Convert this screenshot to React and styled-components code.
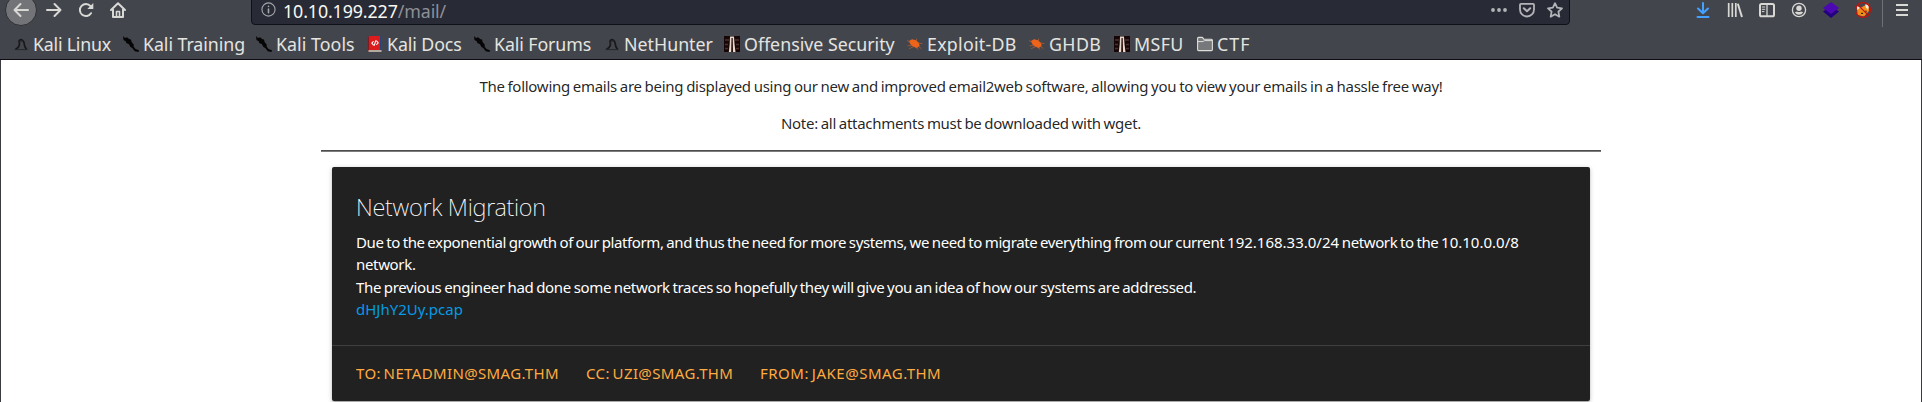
import React from "react";
import styled, { createGlobalStyle } from "styled-components";

const GlobalStyle = createGlobalStyle`
  html, body { margin: 0; height: 402px; overflow: hidden; background: #fff; }
  *, *::before, *::after { box-sizing: border-box; }
  body { font-family: "Noto Sans", "Open Sans", sans-serif; }
`;

const Window = styled.div`
  width: 1922px;
  height: 402px;
  overflow: hidden;
  display: flex;
  flex-direction: column;
`;

/* ---------- browser chrome ---------- */

const Chrome = styled.header`
  height: 60px;
  flex: none;
  background: #43454c;
  border-bottom: 1px solid #0c0c12;
`;

const NavBar = styled.nav`
  display: flex;
  align-items: flex-start;
  height: 33px;
  margin-top: -6px;
  padding: 0 4px 0 5px;
`;

const ToolButton = styled.span`
  width: 32px;
  height: 32px;
  flex: none;
  display: flex;
  align-items: center;
  justify-content: center;
  color: ${(p) => p.$color || "#d8d8d5"};
`;

const BackButton = styled(ToolButton)`
  margin-right: 1px;
  border-radius: 50%;
  background: #737477;
  border: 1px solid #2e3036;
`;

const UrlBar = styled.div`
  width: 1319px;
  height: 31px;
  margin-left: 117px;
  padding: 0 0 0 9px;
  display: flex;
  align-items: center;
  background: #282a36;
  border: 1px solid #101116;
  border-radius: 4px;
`;

const UrlText = styled.div`
  flex: 1;
  margin-left: 7px;
  padding-top: 3px;
  font-size: 17.8px;
  line-height: 24px;
  letter-spacing: -0.1px;
  color: #8f9097;
  white-space: pre;
`;

const Host = styled.span`
  color: #f8f8f2;
`;

const UrlActions = styled.div`
  display: flex;
  align-items: center;
  color: #b3b4b8;
`;

const UrlAction = styled.span`
  width: 28px;
  display: flex;
  justify-content: center;
`;

const Tools = styled.div`
  display: flex;
  margin-left: auto;
`;

const Separator = styled.span`
  width: 1px;
  height: 33px;
  margin: 0 3px;
  background: #6e7075;
`;

const Bookmarks = styled.nav`
  display: flex;
  align-items: center;
  height: 32px;
  padding-left: 13px;
`;

const Bookmark = styled.span`
  width: ${(p) => p.$w}px;
  height: 32px;
  flex: none;
  display: flex;
  align-items: center;
  gap: 4px;
  padding-top: 2px;
  font-size: 17.8px;
  line-height: 24px;
  letter-spacing: ${(p) => p.$track}px;
  color: #e4e4e0;
  white-space: nowrap;

  svg { flex: none; }
`;

/* ---------- mail page ---------- */

const Page = styled.main`
  flex: 1;
  padding: 14.6px 320px 0 320px;
  background: #fff;
  border: solid #3a3b41;
  border-width: 0 1px;
  font-size: 15px;
  line-height: 22.4px;
  color: rgba(0, 0, 0, 0.87);
`;

const Notice = styled.p`
  margin: 0 0 14.6px;
  text-align: center;
  white-space: nowrap;
  word-spacing: -0.8px;
  letter-spacing: ${(p) => p.$track}px;
`;

const Rule = styled.hr`
  height: 2px;
  margin: 16px 0 15px;
  border: 0;
  background: linear-gradient(#4e4e4e 50%, #7c7c7c 50%);
`;

const Card = styled.article`
  margin: 0 11px;
  background: #212121;
  color: #fff;
  border-radius: 2px;
  box-shadow: 0 2px 2px rgba(0, 0, 0, 0.14), 0 3px 1px -2px rgba(0, 0, 0, 0.12),
    0 1px 5px rgba(0, 0, 0, 0.2);
`;

const CardContent = styled.div`
  padding: 24px 24px 24.4px;
`;

const CardTitle = styled.h2`
  margin: 0 0 8px;
  font-size: 23.6px;
  font-weight: 250;
  line-height: 32px;
  letter-spacing: -0.27px;
`;

const Line = styled.div`
  white-space: nowrap;
  word-spacing: -0.8px;
  letter-spacing: ${(p) => p.$track}px;
`;

const Subnet = styled.span`
  letter-spacing: 0;
`;

const Attachment = styled.a`
  color: #039be5;
`;

const CardAction = styled.footer`
  display: flex;
  padding: 16px 24px 16.6px;
  border-top: 1px solid #3f3f3f;
`;

const Address = styled.a`
  width: ${(p) => p.$w}px;
  color: #ffab40;
  text-transform: uppercase;
  word-spacing: -1.5px;
  letter-spacing: ${(p) => p.$track}px;
  white-space: nowrap;
`;

/* ---------- icons ---------- */

const Icon = ({ size = 16, children }) => (
  <svg width={size} height={size} viewBox="0 0 16 16" fill="none" stroke="currentColor" strokeWidth="2" strokeLinecap="round" strokeLinejoin="round">
    {children}
  </svg>
);

const DragonHead = () => (
  <Icon>
    <path d="M3 13C6 11.5 7 8.5 6 5.2C7.5 2.2 11 4 11.2 7.6C11.3 10 12 11.5 13.3 13" stroke="#17181b" strokeWidth="1.7" />
    <path d="M2 13.6H14M6.5 6.5L9 5.2" stroke="#26282c" strokeWidth="1" />
  </Icon>
);

const KaliBlade = () => (
  <Icon>
    <path d="M0 0L2 2L4 1.2L6.5 3.2L8 3.5L8.6 6L10.8 8.7L10.6 10.5L12.5 13L16 14.2L15.5 16L11.8 15.3L9.2 12L7.2 10.8L6 8.2L3.3 7L2.7 5.2L.5 4Z" fill="#050505" stroke="none" />
  </Icon>
);

const DocsBook = () => (
  <Icon>
    <path d="M1.5 1.5Q1.5 0 3 0H14V14H3Q1.5 14 1.5 15Z" fill="#dc1c1c" stroke="none" />
    <path d="M1.4 1.2V15" stroke="#80181d" strokeWidth="1" />
    <path d="M13.5 0V14" stroke="#27457a" strokeWidth="1" />
    <path d="M2 15H14" stroke="#d9cdbb" strokeWidth="1.5" />
    <path d="M6.3 5.5L4.8 7.2L6.3 8.8M9.7 5L11.2 6.8L9.7 8.5M8.7 4.8L7.3 9.3" stroke="#fff" strokeWidth="1.1" />
  </Icon>
);

const Tower = () => (
  <Icon>
    <path d="M0 0H16V16H0Z" fill="#170606" stroke="none" />
    <path d="M1 4H5M11 4H15M1 8.5H4M12 8.5H15M1 12.5H4M12 12.5H15" stroke="#4a302f" strokeWidth="1.4" strokeLinecap="butt" />
    <path d="M6 0.5H10L10.5 8L11.5 16H4.8L5.7 8Z" fill="#e7d8ce" stroke="none" />
    <path d="M7.5 2H8.7L9 16H7.2Z" fill="#260b08" stroke="none" />
  </Icon>
);

const Beetle = () => (
  <Icon>
    <path d="M2 5L5 3.2L9 4.2L12 7L12.6 10L9.8 11.9L5.8 10.5L3.2 8Z" fill="#f0641a" stroke="none" />
    <path d="M0 4.5L3 6M1 9.8L5 9.5M2.5 12.5L7 10.5M9.5 5V3M11 7L15 7.6M11 10L14 12.4M8 11L11 13.3" stroke="#b9602f" strokeWidth=".7" />
  </Icon>
);

const Folder = () => (
  <Icon>
    <path d="M.6 2.4Q.6 1.4 1.6 1.4H5.4L7 3.3H14.4Q15.4 3.3 15.4 4.3V13.6Q15.4 14.6 14.4 14.6H1.6Q.6 14.6 .6 13.6Z" fill="#77787b" stroke="#deded9" strokeWidth="1.1" />
    <path d="M1 5.6H6L7.4 4.6H15" stroke="#deded9" strokeWidth="1" />
  </Icon>
);

const bookmarks = [
  ["Kali Linux", 110, -0.22, DragonHead],
  ["Kali Training", 133, -0.06, KaliBlade],
  ["Kali Tools", 111, 0.06, KaliBlade],
  ["Kali Docs", 107, -0.1, DocsBook],
  ["Kali Forums", 130, -0.1, KaliBlade],
  ["NetHunter", 120, 0, DragonHead],
  ["Offensive Security", 183, 0, Tower],
  ["Exploit-DB", 122, 0.28, Beetle],
  ["GHDB", 85, 0.4, Beetle],
  ["MSFU", 83, 0.4, Tower],
  ["CTF", 60, 1.1, Folder],
];

export default function App() {
  return (
    <Window>
      <GlobalStyle />
      <Chrome>
        <NavBar>
          <BackButton>
            <Icon><path d="M15 8H1.5M7.5 2L1.5 8L7.5 14" /></Icon>
          </BackButton>
          <ToolButton>
            <Icon><path d="M1 8H14.5M8.5 2L14.5 8L8.5 14" /></Icon>
          </ToolButton>
          <ToolButton>
            <Icon>
              <path d="M13 11.2A6 6 0 1 1 12.5 4.2" />
              <path d="M15.3 1V7H9.3Z" fill="currentColor" stroke="none" />
            </Icon>
          </ToolButton>
          <ToolButton>
            <Icon>
              <path d="M1 8L8 1.2L15 8M3 7.5V15H13V7.5" />
              <path d="M6.5 15V9.5H9.5V15" strokeWidth="1.6" />
            </Icon>
          </ToolButton>
          <UrlBar>
            <Icon size={15}>
              <circle cx="8" cy="8" r="7" strokeWidth="1.2" stroke="#a4a5aa" />
              <path d="M8 7.5V11.5M8 4.7V4.8" strokeWidth="1.7" stroke="#a4a5aa" />
            </Icon>
            <UrlText><Host>10.10.199.227</Host>/mail/</UrlText>
            <UrlActions>
              <UrlAction>
                <Icon>
                  <g fill="currentColor" stroke="none">
                    <circle cx="2" cy="8" r="1.9" /><circle cx="8" cy="8" r="1.9" /><circle cx="14" cy="8" r="1.9" />
                  </g>
                </Icon>
              </UrlAction>
              <UrlAction>
                <Icon>
                  <path d="M2 1.8H14Q15 1.8 15 2.8V7.5A7 7 0 0 1 1 7.5V2.8Q1 1.8 2 1.8Z" strokeWidth="1.8" />
                  <path d="M4.8 6.3L8 9.3L11.2 6.3" />
                </Icon>
              </UrlAction>
              <UrlAction>
                <Icon>
                  <path d="M8 1.2L10.1 5.7L15 6.3L11.4 9.7L12.3 14.7L8 12.2L3.7 14.7L4.6 9.7L1 6.3L5.9 5.7Z" strokeWidth="1.8" />
                </Icon>
              </UrlAction>
            </UrlActions>
          </UrlBar>
          <Tools>
            <ToolButton $color="#45a1ff">
              <Icon><path d="M8 1V11M3 6.5L8 11.3L13 6.5" /><path d="M2.5 15H13.5" /></Icon>
            </ToolButton>
            <ToolButton>
              <Icon><g strokeLinecap="butt"><path d="M1.7 1V15M5.3 1V15M8.8 1V15" strokeWidth="1.7" /><path d="M10.8 1.7L15 15" /></g></Icon>
            </ToolButton>
            <ToolButton>
              <Icon>
                <rect x="1" y="2" width="14" height="12.3" rx="1.6" />
                <path d="M8 2V14" strokeWidth="1.3" />
                <path d="M3.3 5H5.8M3.3 7.3H5.8M3.3 9.6H5" strokeWidth="1" />
              </Icon>
            </ToolButton>
            <ToolButton>
              <Icon>
                <circle cx="8" cy="8" r="6.6" strokeWidth="1.3" />
                <circle cx="8" cy="6.2" r="2.7" fill="currentColor" stroke="none" />
                <path d="M3.8 10.2Q5.5 9.4 6 9.4Q8 10.6 10 9.4Q10.5 9.4 12.2 10.2Q10.8 12.8 8 12.8Q5.2 12.8 3.8 10.2Z" fill="currentColor" stroke="none" />
              </Icon>
            </ToolButton>
            <ToolButton>
              <Icon>
                <path d="M0 9.5L3 7.5H13L16 9.5L8 16Z" fill="#24007e" stroke="none" />
                <path d="M8 0L16 6L8 12L0 6Z" fill="#4b08b3" stroke="none" />
              </Icon>
            </ToolButton>
            <ToolButton>
              <Icon>
                <path d="M2 4L6 5.5L13.5 1.5L14 9L9 14.5L2.5 13Z" fill="#ef8e1b" stroke="none" />
                <path d="M1.5 4L5 5.5L2.5 8ZM10.5 2L14 3.5L13 8L10.5 5Z" fill="#f3e8dd" stroke="none" />
                <path d="M6.5 11.4H7.6M11 9V9.8" stroke="#3b2414" strokeWidth="1.2" />
                <circle cx="8" cy="8" r="7.4" stroke="#c3110f" strokeWidth="1.2" />
                <path d="M2.8 2.8L13.2 13.2" stroke="#c3110f" strokeWidth="1.2" />
              </Icon>
            </ToolButton>
            <Separator />
            <ToolButton>
              <Icon><path d="M2 3H14M2 8H14M2 13H14" strokeLinecap="butt" /></Icon>
            </ToolButton>
          </Tools>
        </NavBar>
        <Bookmarks>
          {bookmarks.map(([label, w, track, Glyph]) => (
            <Bookmark key={label} $w={w} $track={track}>
              <Glyph />
              {label}
            </Bookmark>
          ))}
        </Bookmarks>
      </Chrome>
      <Page>
        <Notice $track={-0.27}>
          The following emails are being displayed using our new and improved email2web software, allowing you to view your emails in a hassle free way!
        </Notice>
        <Notice $track={-0.29}>Note: all attachments must be downloaded with wget.</Notice>
        <Rule />
        <Card>
          <CardContent>
            <CardTitle>Network Migration</CardTitle>
            <Line $track={-0.39}>
              Due to the exponential growth of our platform, and thus the need for more systems, we need to migrate everything from our current <Subnet>192.168.33.0/24</Subnet> network to the <Subnet>10.10.0.0/8</Subnet>
            </Line>
            <Line $track={-0.33}>network.</Line>
            <Line $track={-0.335}>
              The previous engineer had done some network traces so hopefully they will give you an idea of how our systems are addressed.
            </Line>
            <Line $track={0}><Attachment>dHJhY2Uy.pcap</Attachment></Line>
          </CardContent>
          <CardAction>
            <Address $w={230} $track={0.36}>To: netadmin@smag.thm</Address>
            <Address $w={174} $track={0.38}>Cc: uzi@smag.thm</Address>
            <Address $w={190} $track={0.5}>From: jake@smag.thm</Address>
          </CardAction>
        </Card>
      </Page>
    </Window>
  );
}
